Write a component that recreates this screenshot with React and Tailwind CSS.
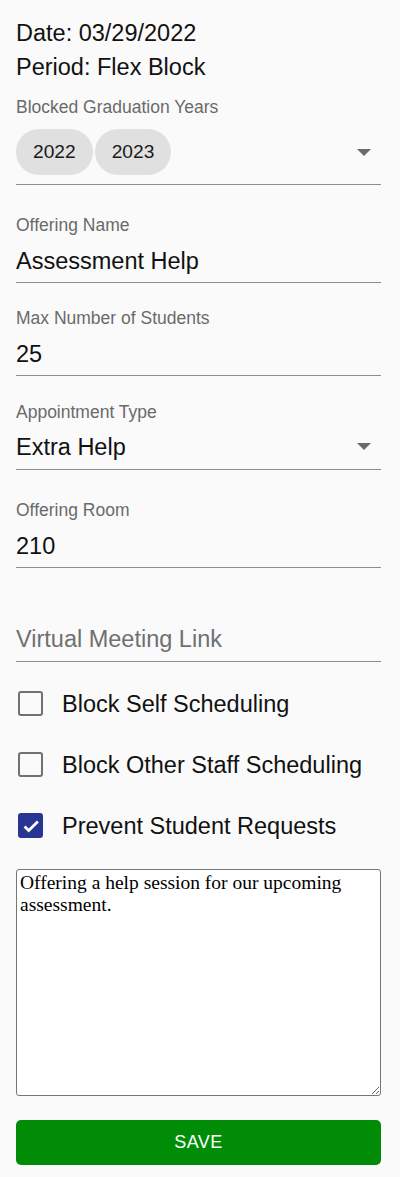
import React from "react";

function Arrow() {
  return (
    <svg width="14" height="7" viewBox="0 0 14 7" className="block">
      <polygon points="0,0 14,0 7,7" fill="#6b6b6b" />
    </svg>
  );
}

function Label({ children, mt }) {
  return (
    <div className={`${mt} text-[17.5px] leading-5 text-[#6a6a6a]`}>{children}</div>
  );
}

function Check({ checked, label, mt }) {
  return (
    <div className={`${mt} flex h-[25px] items-center`}>
      {checked ? (
        <div className="ml-[2px] flex h-[25px] w-[25px] items-center justify-center rounded-[3px] bg-[#283593]">
          <svg width="22" height="22" viewBox="0 0 24 24">
            <path d="M5 12.5l4.5 4.5L19.5 7" fill="none" stroke="#ffffff" strokeWidth="3" />
          </svg>
        </div>
      ) : (
        <div className="ml-[2px] h-[25px] w-[25px] rounded-[3px] border-[2.5px] border-[#717171]" />
      )}
      <span className="ml-[19px] text-[23.5px] leading-[28px] text-[#111111]">{label}</span>
    </div>
  );
}

export default function App() {
  return (
    <div className="min-h-[1177px] bg-[#fafafa] pl-4 pr-[19px] pt-4 font-['Liberation_Sans',Arial,sans-serif] text-[#111111]">
      <div className="text-[23.5px] leading-[34px]">Date: 03/29/2022</div>
      <div className="text-[23.5px] leading-[34px]">Period: Flex Block</div>

      <Label mt="mt-[12.5px]">Blocked Graduation Years</Label>
      <div className="mt-[12.5px] flex items-center border-b border-[#8c8c8c] pb-[9px]">
        <div className="flex gap-[2px]">
          <span className="flex h-[46px] items-center rounded-full bg-[#e0e0e0] px-[17px] text-[19.2px] text-[#1a1a1a]">2022</span>
          <span className="flex h-[46px] items-center rounded-full bg-[#e0e0e0] px-[17px] text-[19.2px] text-[#1a1a1a]">2023</span>
        </div>
        <div className="ml-auto mr-[10px]">
          <Arrow />
        </div>
      </div>

      <Label mt="mt-[29.5px]">Offering Name</Label>
      <div className="mt-3 border-b border-[#8c8c8c] pb-[7px] text-[23.5px] leading-[28px]">Assessment Help</div>

      <Label mt="mt-[25.5px]">Max Number of Students</Label>
      <div className="mt-3 border-b border-[#8c8c8c] pb-[7px] text-[23.5px] leading-[28px]">25</div>

      <Label mt="mt-[25.5px]">Appointment Type</Label>
      <div className="mt-[11px] flex items-center border-b border-[#8c8c8c] pb-[8.5px] text-[23.5px] leading-[28px]">
        <span>Extra Help</span>
        <div className="ml-auto mr-[10px]">
          <Arrow />
        </div>
      </div>

      <Label mt="mt-[29.5px]">Offering Room</Label>
      <div className="mt-3 border-b border-[#8c8c8c] pb-[7.5px] text-[23.5px] leading-[28px]">210</div>

      <div className="mt-[56.5px] border-b border-[#8c8c8c] pb-[8.5px] text-[23.5px] leading-[28px] text-[#707070]">Virtual Meeting Link</div>

      <Check mt="mt-[29px]" label="Block Self Scheduling" />
      <Check mt="mt-[36px]" label="Block Other Staff Scheduling" />
      <Check mt="mt-[36px]" checked label="Prevent Student Requests" />

      <textarea
        className="mt-[31px] block h-[227px] w-full resize rounded-[3px] border border-[#767676] bg-white px-[3px] pt-[2px] font-['Liberation_Serif','Times_New_Roman',serif] text-[19.5px] leading-[22px] text-black"
        defaultValue="Offering a help session for our upcoming assessment."
      />

      <button className="mt-[24px] flex h-[45px] w-full items-center justify-center rounded-[5px] bg-[#008c07] text-[18px] tracking-[0.5px] text-white">
        SAVE
      </button>
    </div>
  );
}
